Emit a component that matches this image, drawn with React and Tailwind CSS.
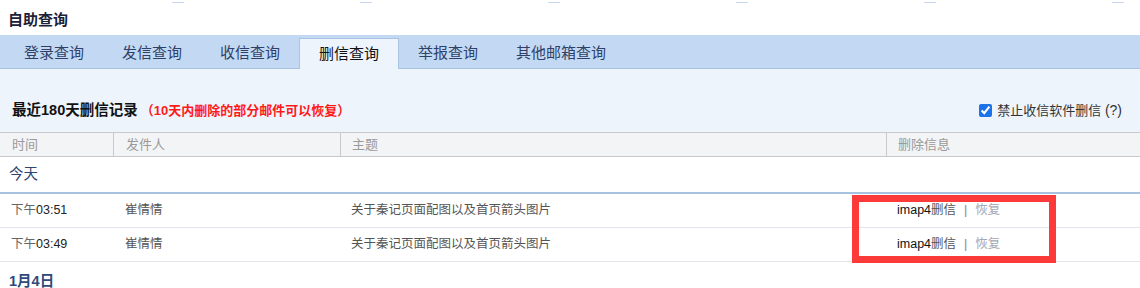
import React from "react";

const tabs = ["登录查询", "发信查询", "收信查询", "删信查询", "举报查询", "其他邮箱查询"];

const rows = [
  { time: "03:51", from: "崔情情", subject: "关于秦记页面配图以及首页箭头图片" },
  { time: "03:49", from: "崔情情", subject: "关于秦记页面配图以及首页箭头图片" },
];

const cols = "grid grid-cols-[113px_227px_546px_1fr]";

export default function App() {
  return (
    <div className="relative w-[1140px] h-[288px] overflow-hidden bg-white font-['Liberation_Sans','Noto_Sans_CJK_SC',sans-serif]">
      {/* Title */}
      <div className="h-[35px] pt-[2px]">
        <div className="flex h-px pl-[172px] gap-[176px]">
          {[0, 1, 2, 3, 4, 5].map((i) => (
            <span key={i} className="w-[12px] h-px bg-[#c6d6f2]" />
          ))}
        </div>
        <div className="pl-[8px] pt-[1px] leading-[32px] text-[15px] font-bold text-[#1b2238]">自助查询</div>
      </div>

      {/* Tabs */}
      <div className="h-[34px] flex items-end pl-[5px] bg-[#c3d9f3] border-b border-[#a8c2e0]">
        {tabs.map((t, i) =>
          i === 3 ? (
            <div
              key={t}
              className="h-[31px] -mb-px px-[19px] flex items-center bg-[#eef4fc] border border-b-0 border-[#a9c3e2] text-[15px] text-[#111]"
            >
              {t}
            </div>
          ) : (
            <div key={t} className="h-[31px] -mb-px px-[19px] flex items-center text-[15px] text-[#2f4068]">
              {t}
            </div>
          )
        )}
      </div>

      {/* Summary line */}
      <div className="h-[63px] bg-[#eef4fc] flex items-center justify-between pl-[12px] pr-[18px] pt-[20px]">
        <div className="flex items-center">
          <span className="text-[14.5px] font-bold text-[#111]">最近180天删信记录</span>
          <span className="ml-[3px] text-[13px] font-bold text-[#ff1a1a]">（10天内删除的部分邮件可以恢复）</span>
        </div>
        <label className="flex items-center gap-[5px] text-[13px] text-[#333]">
          <input type="checkbox" defaultChecked className="w-[13px] h-[13px] m-0 accent-[#1a73e8]" />
          <span>
            禁止收信软件删信 <span className="text-[14px]">(?)</span>
          </span>
        </label>
      </div>

      {/* Table header */}
      <div className={`${cols} h-[25px] bg-[#f3f4f6] border-y border-[#c9c9c9] text-[13px] text-[#9a9a9a]`}>
        <div className="pl-[12px] flex items-center">时间</div>
        <div className="pl-[12px] flex items-center border-l border-[#c9c9c9]">发件人</div>
        <div className="pl-[11px] flex items-center border-l border-[#c9c9c9]">主题</div>
        <div className="pl-[11px] flex items-center border-l border-[#c9c9c9]">删除信息</div>
      </div>

      {/* Today group */}
      <div className="h-[37px] pl-[9px] flex items-center border-b-2 border-[#a6c2df] text-[14.5px] text-[#2f4470]">今天</div>

      {rows.map((r, i) => (
        <div key={i} className={`${cols} h-[34px] border-b border-[#e3e4ec] text-[12.5px] text-[#333]`}>
          <div className="pl-[11px] flex items-center">
            <span className="text-[#666]">下午</span>
            <span className="text-[#222]">{r.time}</span>
          </div>
          <div className="pl-[12px] flex items-center text-[#555]">{r.from}</div>
          <div className="pl-[11px] flex items-center text-[#555]">{r.subject}</div>
          <div className="pl-[11px] flex items-center">
            <span className="text-[#111]">imap4</span>
            <span className="text-[#555]">删信</span>
            <span className="mx-[8px] text-[#888]">|</span>
            <span className="text-[#a3a8b3]">恢复</span>
          </div>
        </div>
      ))}

      {/* Earlier group */}
      <div className="h-[38px] pl-[9px] pt-[2px] flex items-center text-[14.5px] font-bold text-[#2d4a7a]">1月4日</div>

      {/* Annotation box */}
      <div className="absolute left-[852px] top-[195px] w-[204px] h-[68px] border-[7px] border-[#fd3a3a]" />
    </div>
  );
}
